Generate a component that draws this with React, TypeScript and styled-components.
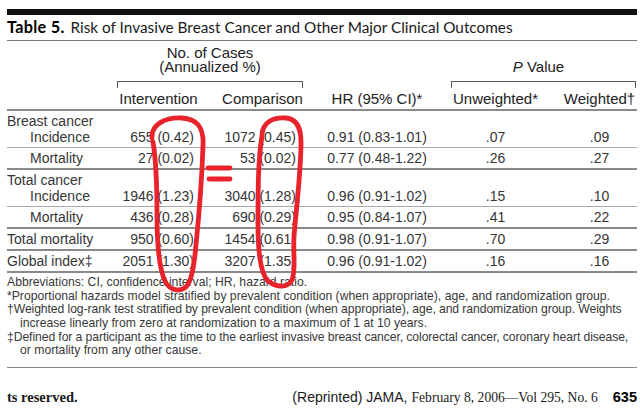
import React from "react";
import styled, { createGlobalStyle } from "styled-components";

const GlobalStyle = createGlobalStyle`
  html, body { margin: 0; padding: 0; background: #ffffff; }
  #root { width: 640px; height: 412px; }
`;

const COLS = "105px 93px 115px 114px 123px 80px";

const Page = styled.div`
  position: relative;
  width: 640px;
  height: 412px;
  box-sizing: border-box;
  padding: 9px 3px 0 7px;
  overflow: hidden;
  background: #fff;
  font-family: "Liberation Sans", Arial, sans-serif;
  color: #363636;
`;

const TopBar = styled.div`
  height: 6px;
  background: #111;
`;

const Title = styled.div`
  margin-top: 3px;
  padding-bottom: 4px;
  border-bottom: 1px solid #777;
  font-family: Lato, "Open Sans", sans-serif;
  font-size: 15.35px;
  line-height: 18px;
  color: #1a1a1a;
  white-space: nowrap;
`;

const TitleLead = styled.b`
  font-weight: 700;
  font-size: 16.2px;
  letter-spacing: 0.3px;
  color: #000;
  margin-right: 2px;
`;

const HeadGrid = styled.div`
  display: grid;
  grid-template-columns: ${COLS};
  border-bottom: 2px solid #8a8a8a;
  font-size: 15px;
  color: #222;
`;

const GroupHead = styled.div<{ $from: number; $to: number; $ml: number; $mr: number }>`
  grid-column: ${(p) => p.$from} / ${(p) => p.$to};
  grid-row: 1;
  margin: 0 ${(p) => p.$mr}px 0 ${(p) => p.$ml}px;
  padding-top: 4.5px;
  display: flex;
  flex-direction: column;
  justify-content: flex-end;
`;

const GroupText = styled.div<{ $shift?: number }>`
  text-align: center;
  line-height: 14.5px;
  padding-right: ${(p) => p.$shift ?? 0}px;
  i { font-style: italic; }
`;

const Bracket = styled.div`
  margin-top: 6.5px;
  height: 7px;
  border: 1px solid #5a5a5a;
  border-bottom: none;
  box-sizing: border-box;
`;

const ColHead = styled.div<{ $col: number; $pl?: number }>`
  grid-column: ${(p) => p.$col};
  grid-row: 2;
  text-align: center;
  line-height: 15px;
  padding: 3px 0 3px ${(p) => p.$pl ?? 0}px;
  white-space: nowrap;
`;

const RowBlock = styled.div<{ $thick?: boolean }>`
  padding: 2px 0;
  border-bottom: ${(p) => (p.$thick ? "2px solid #8a8a8a" : "1px solid #a8a8a8")};
  font-size: 14px;
  line-height: 16px;
`;

const GroupLabel = styled.div`
  white-space: nowrap;
`;

const DataLine = styled.div`
  display: grid;
  grid-template-columns: ${COLS};
  white-space: nowrap;
`;

const LabelCell = styled.div<{ $indent?: boolean }>`
  padding-left: ${(p) => (p.$indent ? 23 : 0)}px;
`;

const NumCell = styled.div<{ $align: "right" | "center"; $pr?: number; $pl?: number }>`
  text-align: ${(p) => p.$align};
  padding-right: ${(p) => p.$pr ?? 0}px;
  padding-left: ${(p) => p.$pl ?? 0}px;
`;

const Notes = styled.div`
  padding: 3.2px 0 9px;
  border-bottom: 1.5px solid #8a8a8a;
  font-size: 12.2px;
  line-height: 13.6px;
  color: #383838;
`;

const Note = styled.div<{ $cont?: boolean; $tight?: boolean }>`
  white-space: nowrap;
  padding-left: ${(p) => (p.$cont ? 13 : 0)}px;
  letter-spacing: ${(p) => (p.$tight ? "-0.09px" : "0")};
`;

const Footer = styled.div`
  margin-top: 20px;
  display: flex;
  justify-content: space-between;
  align-items: baseline;
  line-height: 18px;
  color: #1a1a1a;
`;

const Rights = styled.span`
  font-family: "Liberation Serif", "Times New Roman", serif;
  font-weight: 700;
  font-size: 14.5px;
`;

const Citation = styled.span`
  display: flex;
  align-items: baseline;
  white-space: nowrap;
`;

const CiteSans = styled.span`
  font-family: "Liberation Sans", Arial, sans-serif;
  font-size: 14px;
`;

const CiteSerif = styled.span`
  font-family: "Liberation Serif", "Times New Roman", serif;
  font-size: 13.6px;
  margin-left: 4px;
`;

const PageNo = styled.span`
  font-family: "Liberation Sans", Arial, sans-serif;
  font-weight: 700;
  font-size: 14.5px;
  margin-left: 15px;
  color: #000;
`;

const Scribble = styled.svg`
  position: absolute;
  left: 0;
  top: 0;
  pointer-events: none;
`;

type Row = {
  group?: string;
  label: string;
  indent?: boolean;
  int: string;
  cmp: string;
  hr: string;
  unw: string;
  wt: string;
  thick?: boolean;
};

const rows: Row[] = [
  { group: "Breast cancer", label: "Incidence", indent: true, int: "655 (0.42)", cmp: "1072 (0.45)", hr: "0.91 (0.83-1.01)", unw: ".07", wt: ".09" },
  { label: "Mortality", indent: true, int: "27 (0.02)", cmp: "53 (0.02)", hr: "0.77 (0.48-1.22)", unw: ".26", wt: ".27", thick: true },
  { group: "Total cancer", label: "Incidence", indent: true, int: "1946 (1.23)", cmp: "3040 (1.28)", hr: "0.96 (0.91-1.02)", unw: ".15", wt: ".10" },
  { label: "Mortality", indent: true, int: "436 (0.28)", cmp: "690 (0.29)", hr: "0.95 (0.84-1.07)", unw: ".41", wt: ".22", thick: true },
  { label: "Total mortality", int: "950 (0.60)", cmp: "1454 (0.61)", hr: "0.98 (0.91-1.07)", unw: ".70", wt: ".29", thick: true },
  { label: "Global index‡", int: "2051 (1.30)", cmp: "3207 (1.35)", hr: "0.96 (0.91-1.02)", unw: ".16", wt: ".16", thick: true },
];

const notes: { text: string; cont?: boolean; tight?: boolean }[] = [
  { text: "Abbreviations: CI, confidence interval; HR, hazard ratio." },
  { text: "*Proportional hazards model stratified by prevalent condition (when appropriate), age, and randomization group." },
  { text: "†Weighted log-rank test stratified by prevalent condition (when appropriate), age, and randomization group. Weights", tight: true },
  { text: "increase linearly from zero at randomization to a maximum of 1 at 10 years.", cont: true },
  { text: "‡Defined for a participant as the time to the earliest invasive breast cancer, colorectal cancer, coronary heart disease,", tight: true },
  { text: "or mortality from any other cause.", cont: true },
];

export default function App() {
  return (
    <>
      <GlobalStyle />
      <Page>
        <TopBar />
        <Title>
          <TitleLead>Table 5.</TitleLead> Risk of Invasive Breast Cancer and Other Major Clinical Outcomes
        </Title>
        <HeadGrid>
          <GroupHead $from={2} $to={4} $ml={5} $mr={17}>
            <GroupText>No. of Cases</GroupText>
            <GroupText>(Annualized %)</GroupText>
            <Bracket />
          </GroupHead>
          <GroupHead $from={5} $to={7} $ml={17} $mr={1}>
            <GroupText $shift={10}>
              <i>P</i> Value
            </GroupText>
            <Bracket />
          </GroupHead>
          <ColHead $col={2}>Intervention</ColHead>
          <ColHead $col={3}>Comparison</ColHead>
          <ColHead $col={4}>HR (95% CI)*</ColHead>
          <ColHead $col={5}>Unweighted*</ColHead>
          <ColHead $col={6} $pl={5}>Weighted†</ColHead>
        </HeadGrid>
        {rows.map((r, i) => (
          <RowBlock key={i} $thick={r.thick}>
            {r.group && <GroupLabel>{r.group}</GroupLabel>}
            <DataLine>
              <LabelCell $indent={r.indent}>{r.label}</LabelCell>
              <NumCell $align="right" $pr={11}>{r.int}</NumCell>
              <NumCell $align="right" $pr={24}>{r.cmp}</NumCell>
              <NumCell $align="center">{r.hr}</NumCell>
              <NumCell $align="center">{r.unw}</NumCell>
              <NumCell $align="center" $pl={5}>{r.wt}</NumCell>
            </DataLine>
          </RowBlock>
        ))}
        <Notes>
          {notes.map((n, i) => (
            <Note key={i} $cont={n.cont} $tight={n.tight}>{n.text}</Note>
          ))}
        </Notes>
        <Footer>
          <Rights>ts reserved.</Rights>
          <Citation>
            <CiteSans>(Reprinted) JAMA,</CiteSans>
            <CiteSerif>February 8, 2006—Vol 295, No. 6</CiteSerif>
            <PageNo>635</PageNo>
          </Citation>
        </Footer>
        <Scribble width="640" height="412" viewBox="0 0 640 412">
          <g fill="none" stroke="#e8232b" strokeWidth="4.8" strokeLinecap="round" strokeLinejoin="round">
            <path d="M152,138 C151,124 166,117 182,118 C198,119 204,128 203,146 C202,176 199,215 196,245 C194,266 192,280 186,287 C180,292 170,291 165,281 C158,266 157,240 157,215 C157,185 156,160 153,142" />
            <path d="M262,136 C262,121 275,117 286,118 C297,119 301,128 301,142 C301,170 297,202 294,236 C293,256 296,270 292,280 C288,288 277,288 268,281 C260,273 258,250 258,225 C258,190 258,160 262,136" />
            <path d="M208,168 L230,168" />
            <path d="M209,179 L230,179" />
          </g>
        </Scribble>
      </Page>
    </>
  );
}
